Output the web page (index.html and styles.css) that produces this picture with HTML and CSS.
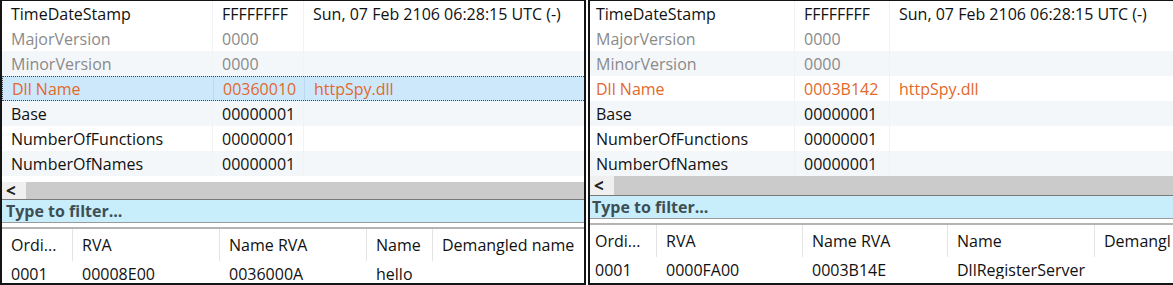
FILE: index.html
```html
<!DOCTYPE html>
<html>
<head>
<meta charset="utf-8">
<link rel="stylesheet" href="styles.css">
</head>
<body>
<div class="wrap">
  <div class="panel left">
    <div class="grid">
      <div class="row"><span class="c1">TimeDateStamp</span><span class="c2">FFFFFFFF</span><span class="c3">Sun, 07 Feb 2106 06:28:15 UTC (-)</span></div>
      <div class="row dim"><span class="c1">MajorVersion</span><span class="c2">0000</span><span class="c3"></span></div>
      <div class="row dim tint"><span class="c1">MinorVersion</span><span class="c2">0000</span><span class="c3"></span></div>
      <div class="row hot sel"><span class="c1">Dll Name</span><span class="c2">00360010</span><span class="c3">httpSpy.dll</span></div>
      <div class="row tint"><span class="c1">Base</span><span class="c2">00000001</span><span class="c3"></span></div>
      <div class="row"><span class="c1">NumberOfFunctions</span><span class="c2">00000001</span><span class="c3"></span></div>
      <div class="row tint"><span class="c1">NumberOfNames</span><span class="c2">00000001</span><span class="c3"></span></div>
      <div class="filler"></div>
    </div>
    <div class="hscroll"><span class="arrow">&lt;</span><span class="thumb"></span></div>
    <div class="filter">Type to filter...</div>
    <div class="gap"></div>
    <div class="exports">
      <div class="erow head"><span class="e1">Ordi...</span><span class="e2">RVA</span><span class="e3">Name RVA</span><span class="e4">Name</span><span class="e5">Demangled name</span></div>
      <div class="erow data"><span class="e1">0001</span><span class="e2">00008E00</span><span class="e3">0036000A</span><span class="e4">hello</span><span class="e5"></span></div>
    </div>
  </div>
  <div class="panel right">
    <div class="grid">
      <div class="row"><span class="c1">TimeDateStamp</span><span class="c2">FFFFFFFF</span><span class="c3">Sun, 07 Feb 2106 06:28:15 UTC (-)</span></div>
      <div class="row dim"><span class="c1">MajorVersion</span><span class="c2">0000</span><span class="c3"></span></div>
      <div class="row dim tint"><span class="c1">MinorVersion</span><span class="c2">0000</span><span class="c3"></span></div>
      <div class="row hot"><span class="c1">Dll Name</span><span class="c2">0003B142</span><span class="c3">httpSpy.dll</span></div>
      <div class="row tint"><span class="c1">Base</span><span class="c2">00000001</span><span class="c3"></span></div>
      <div class="row"><span class="c1">NumberOfFunctions</span><span class="c2">00000001</span><span class="c3"></span></div>
      <div class="row tint"><span class="c1">NumberOfNames</span><span class="c2">00000001</span><span class="c3"></span></div>
    </div>
    <div class="hscroll"><span class="arrow">&lt;</span><span class="thumb"></span></div>
    <div class="filter">Type to filter...</div>
    <div class="gap"></div>
    <div class="exports">
      <div class="erow head"><span class="e1">Ordi...</span><span class="e2">RVA</span><span class="e3">Name RVA</span><span class="e4">Name</span><span class="e5">Demangl</span></div>
      <div class="erow data"><span class="e1">0001</span><span class="e2">0000FA00</span><span class="e3">0003B14E</span><span class="e4">DllRegisterServer</span><span class="e5"></span></div>
    </div>
  </div>
</div>
</body>
</html>
```
FILE: styles.css
```css
html, body {
  margin: 0;
  padding: 0;
  background: #ffffff;
}
body {
  font-family: "Open Sans", "Noto Sans", sans-serif;
  font-size: 16px;
  color: #111111;
  width: 1173px;
  height: 285px;
  overflow: hidden;
}
.wrap {
  display: flex;
  gap: 2px;
  height: 285px;
}
.panel {
  display: flex;
  flex-direction: column;
  box-sizing: border-box;
  overflow: hidden;
  background: #fff;
}
.left {
  width: 586px;
  height: 285px;
  border: 2px solid #141414;
  border-top-width: 1px;
}
.right {
  width: 585px;
  height: 285px;
  border: 2px solid #141414;
  border-top-width: 1px;
  border-right: none;
  border-bottom-width: 2px;
}
.grid {
  display: flex;
  flex-direction: column;
}
.row {
  display: grid;
  height: 25px;
  align-items: center;
  white-space: nowrap;
  box-sizing: border-box;
}
.left .row { grid-template-columns: 211px 91px 1fr; }
.right .row { grid-template-columns: 205px 95px 1fr; }
.row > span {
  height: 100%;
  display: flex;
  align-items: center;
  padding-left: 9px;
  padding-top: 1px;
  box-sizing: border-box;
  border-right: 1px solid #f0f2f4;
  overflow: hidden;
}
.right .row > .c1 { padding-left: 6px; }
.right .row > .c2 { padding-left: 9px; }
.row > .c3 { border-right: none; }
.tint { background: #f4f7fa; }
.dim { color: #8a8a8a; }
.hot { color: #e2692b; }
.sel {
  background: #cde8fb;
  border-top: 1px dotted #444;
  border-bottom: 1px dotted #444;
  border-left: 1px dotted #444;
}
.sel > span { border-right-color: #bcd8ee; }
.filler { height: 6px; }
.hscroll {
  display: flex;
  height: 19px;
  border-bottom: 1px solid #7a7a7a;
}
.arrow {
  width: 24px;
  background: #f0f0f0;
  display: flex;
  align-items: center;
  padding-left: 4px;
  box-sizing: border-box;
  font-weight: 700;
  font-size: 17px;
  line-height: 1;
  color: #222;
}
.thumb {
  flex: 1;
  background: #cbcbcb;
}
.filter {
  height: 22px;
  background: #c8eefc;
  display: flex;
  align-items: center;
  padding-left: 4px;
  font-weight: 700;
  color: #3e4e54;
  border-bottom: 1px solid #9a9a9a;
}
.right .filter { padding-left: 2px; }
.gap {
  height: 4px;
  border-bottom: 2px solid #b4b4b4;
}
.exports {
  display: flex;
  flex-direction: column;
}
.erow {
  display: grid;
  white-space: nowrap;
  align-items: stretch;
}
.left .erow { grid-template-columns: 71px 147px 147px 66px 1fr; }
.right .erow { grid-template-columns: 67px 146px 145px 147px 1fr; }
.erow > span {
  display: flex;
  align-items: center;
  padding-left: 9px;
  overflow: hidden;
}
.right .erow > .e1 { padding-left: 5px; }
.head { height: 32px; }
.head > span { border-right: 1px solid #e4e4e4; }
.head > .e5 { border-right: none; }
.data { height: 22px; }
.data > span { padding-top: 3px; }
```
